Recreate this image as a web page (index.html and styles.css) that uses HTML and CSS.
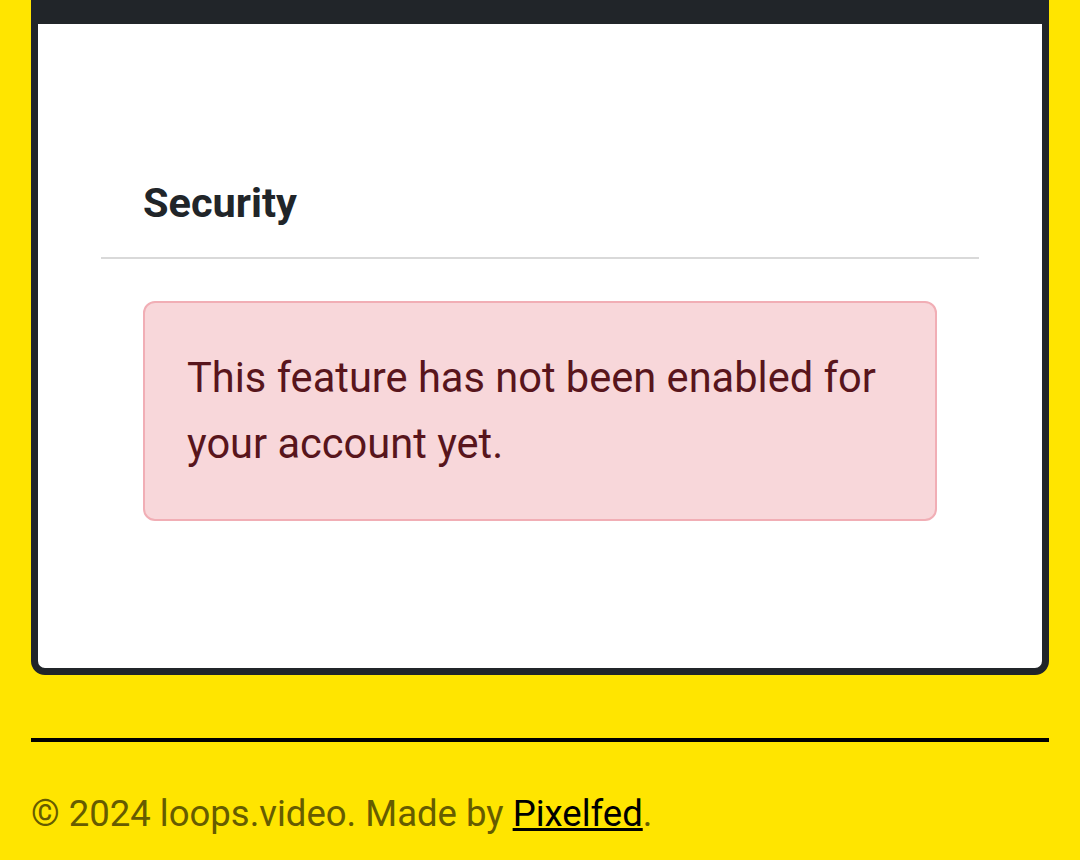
FILE: index.html
```html
<!DOCTYPE html>
<html>

<head>
    <title>Security</title>
    <link rel="stylesheet" href="styles.css">
</head>

<body>
    <div class="page">
        <div class="card">
            <div class="card-body">
                <h2 class="section-title">Security</h2>
                <hr class="divider">
                <div class="alert">
                    This feature has not been enabled for your account yet.
                </div>
            </div>
        </div>

        <!-- footer -->
        <footer class="footer">
            <p>&copy; 2024 loops.video. Made by <a href="#">Pixelfed</a>.</p>
        </footer>
    </div>
</body>

</html>
```

FILE: styles.css
```css
body {
    font-family: Roboto, "Liberation Sans", Arial, sans-serif;
    background-color: #ffe500;
    margin: 0;
    padding: 0;
}

.page {
    padding: 0 31px;
}

.card {
    background-color: #fff;
    border: 7px solid #212529;
    border-top-width: 24px;
    border-radius: 0 0 14px 14px;
}

.card-body {
    padding: 154px 63px 147px 63px;
}

.section-title {
    font-size: 41.5px;
    font-weight: 700;
    color: #212529;
    line-height: 50px;
    margin: 0 0 0 42px;
    padding-bottom: 29px;
}

.divider {
    border: none;
    border-top: 2px solid #d9d9d9;
    margin: 0 0 42px 0;
}

.alert {
    margin: 0 42px;
    padding: 42px 42px;
    background-color: #f8d7da;
    border: 2px solid #f1aeb5;
    border-radius: 12px;
    color: #58151c;
    font-size: 41.6px;
    line-height: 66px;
}

/* footer under the card */
.footer {
    margin-top: 63px;
    border-top: 4px solid #000;
    padding-top: 50px;
}

.footer p {
    margin: 0;
    font-size: 36.5px;
    line-height: 43px;
    color: #665c00;
}

.footer a {
    color: #000;
    text-decoration: underline;
}
```
